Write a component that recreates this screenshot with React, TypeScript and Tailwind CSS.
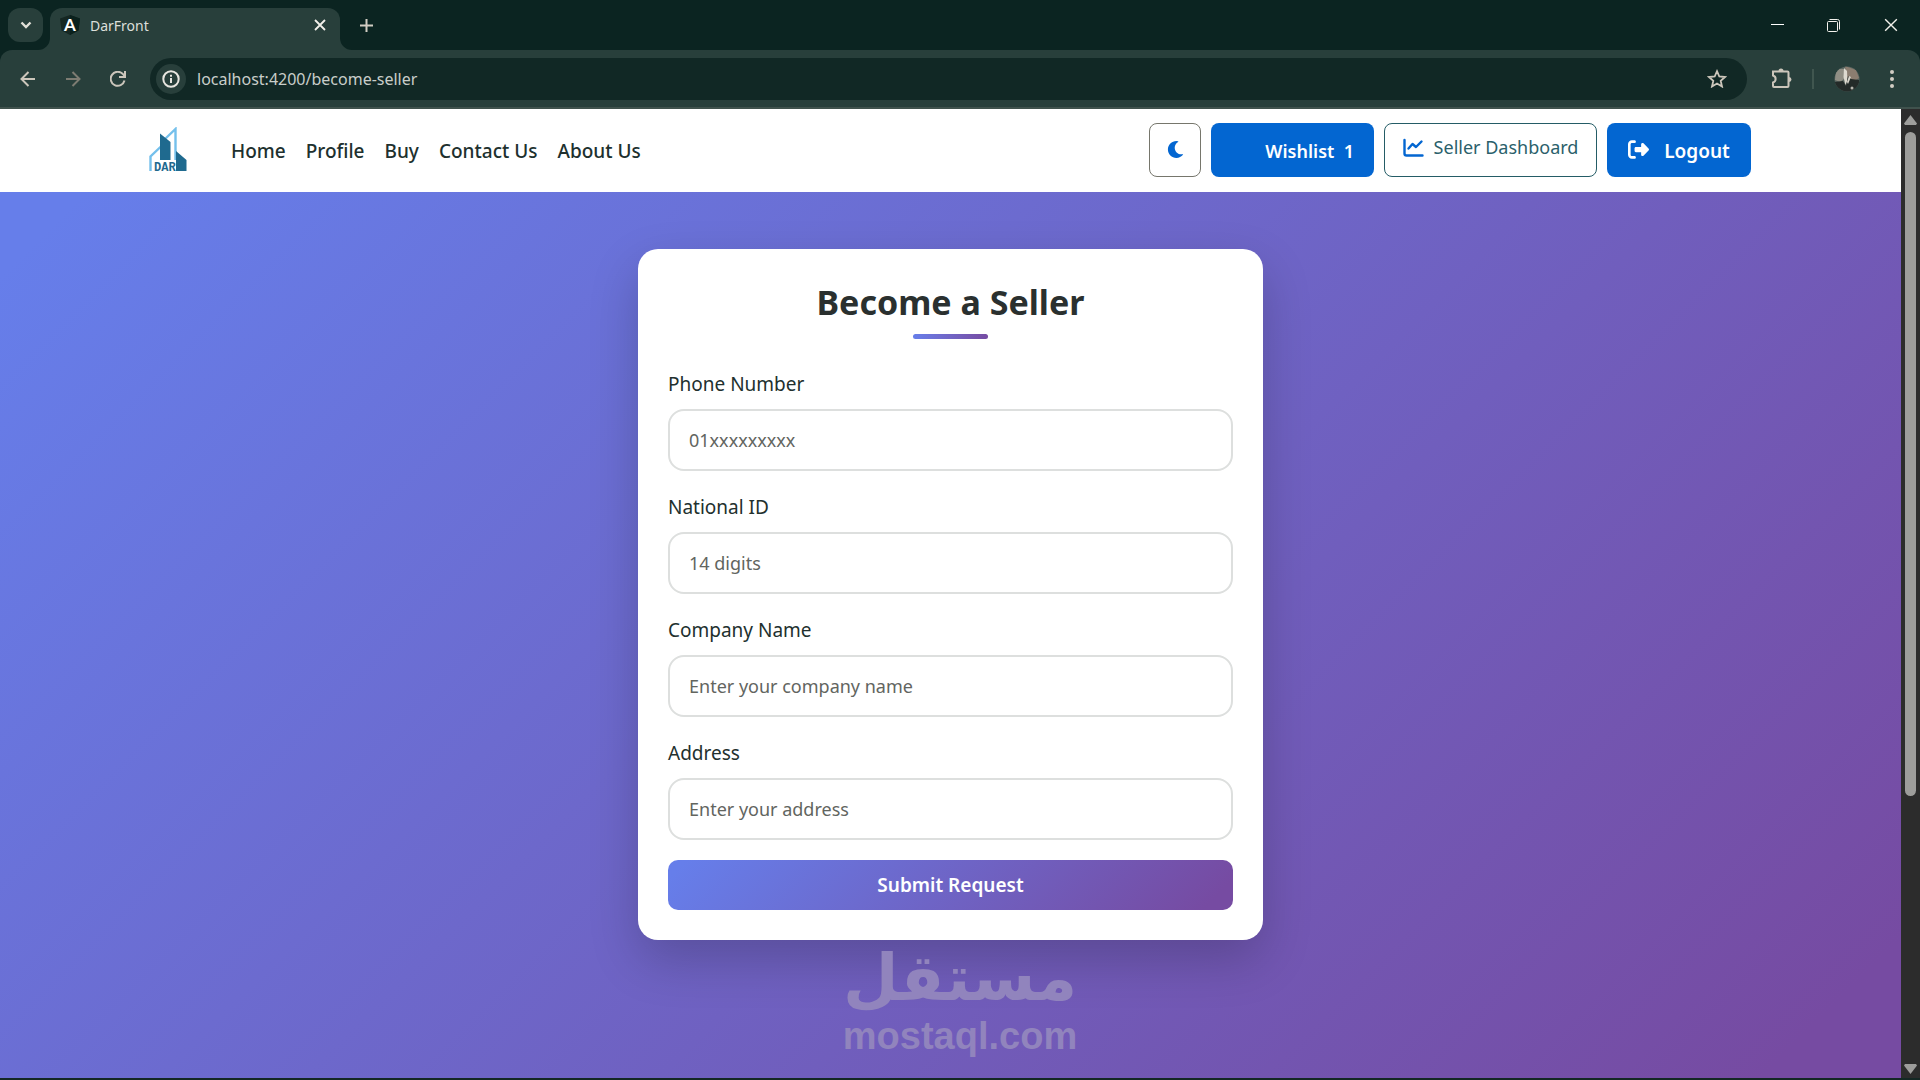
import React from "react";
import { FaMoon } from "react-icons/fa";
import { FaRightFromBracket } from "react-icons/fa6";

function Caret() {
  return (
    <svg width="12" height="8" viewBox="0 0 12 8" fill="none" stroke="#e2e0d8" strokeWidth="2.4">
      <path d="M1.5 1.5 6 6l4.5-4.5" />
    </svg>
  );
}

function Cross({ size, width }: { size: number; width: number }) {
  return (
    <svg width={size} height={size} viewBox="0 0 12 12" fill="none" stroke="#f2f0ea" strokeWidth={width}>
      <path d="m1 1 10 10M11 1 1 11" />
    </svg>
  );
}

function TabStrip() {
  return (
    <div className="flex h-[50px] items-end bg-[#0b2421] pl-2">
      <button aria-label="Search tabs" className="mb-2 flex h-[34px] w-[35px] items-center justify-center rounded-xl bg-[#283f3b]">
        <Caret />
      </button>
      <div className="relative ml-[7px] flex h-[42px] w-[290px] items-center rounded-t-xl bg-[#283f3b] px-[10px] pb-2">
        <svg className="absolute bottom-0 left-[-12px]" width="12" height="12" viewBox="0 0 12 12">
          <path d="M12 0v12H0A12 12 0 0 0 12 0Z" fill="#283f3b" />
        </svg>
        <svg className="absolute right-[-12px] bottom-0" width="12" height="12" viewBox="0 0 12 12">
          <path d="M0 0v12h12A12 12 0 0 1 0 0Z" fill="#283f3b" />
        </svg>
        <svg width="20" height="20" viewBox="0 0 20 20">
          <path d="M10 0 20 3.5 18.5 15.5 10 20 1.5 15.5 0 3.5Z" fill="#152723" />
          <path d="M10 0 20 3.5 18.5 15.5 10 20Z" fill="#0a211d" />
          <text x="10" y="15.5" textAnchor="middle" fontSize="17" fontWeight="700" fill="#fff" fontFamily="Lato, sans-serif">A</text>
        </svg>
        <span className="ml-[10px] flex-1 text-[14px] text-[#dcdfda]">DarFront</span>
        <button aria-label="Close tab" className="mr-1"><Cross size={12} width={1.8} /></button>
      </div>
      <button aria-label="New tab" className="mb-[18px] ml-5">
        <svg width="13" height="13" viewBox="0 0 13 13" stroke="#d2cdc3" strokeWidth="2"><path d="M6.500 0v13M0 6.500h13" /></svg>
      </button>
      <div className="ml-auto flex h-full items-center pr-[22px]">
        <button aria-label="Minimize" className="mr-[43px]">
          <svg width="13" height="13" viewBox="0 0 13 13"><path d="M0 5.500h13" stroke="#fff" /></svg>
        </button>
        <button aria-label="Restore" className="mr-11">
          <svg width="13" height="13" viewBox="0 0 13 13" fill="none" stroke="#f5f3ee">
            <rect x=".5" y="2.500" width="10" height="10" rx="1" />
            <path d="M2.500.5h8a2 2 0 0 1 2 2v8" />
          </svg>
        </button>
        <button aria-label="Close window"><Cross size={14} width={1.2} /></button>
      </div>
    </div>
  );
}

function Toolbar() {
  const stroke = "#ccc6bb";
  return (
    <div className="bg-[#0b2421]">
      <div className="flex h-[59px] items-center rounded-t-xl border-b-2 border-[#40524d] bg-[#283f3b] pr-[26px] pl-5">
        <button aria-label="Back">
          <svg width="16" height="16" viewBox="0 0 16 16" fill="none" stroke={stroke} strokeWidth="2"><path d="M15 8H2M8.500 1 1.500 8l7 7" /></svg>
        </button>
        <button aria-label="Forward" className="ml-[29px]">
          <svg width="16" height="16" viewBox="0 0 16 16" fill="none" stroke="#7d7c72" strokeWidth="2"><path d="M1 8h13M7.500 1l7 7-7 7" /></svg>
        </button>
        <button aria-label="Reload" className="ml-[29px]">
          <svg width="16" height="16" viewBox="0 0 16 16" fill="none" stroke={stroke} strokeWidth="2"><path d="M14.500 9.500A7 7 0 1 1 13 3.200L15 5.500M15 0v6H9" /></svg>
        </button>
        <div className="ml-6 flex h-[42px] flex-1 items-center rounded-full bg-[#112825] pr-5 pl-1.5">
          <button aria-label="Site information" className="flex size-[30px] items-center justify-center rounded-full bg-[#283f3b]">
            <svg width="18" height="18" viewBox="0 0 18 18" fill="none" stroke="#e8e6e0" strokeWidth="2"><circle cx="9" cy="9" r="7.700" /><path d="M9 8v5M9 4.800v2" /></svg>
          </button>
          <input aria-label="Address bar" defaultValue="localhost:4200/become-seller" className="ml-[11px] min-w-0 flex-1 bg-transparent text-[16px] text-[#c9ceca] outline-none" />
          <button aria-label="Bookmark">
            <svg width="20" height="19" viewBox="0 0 20 19" fill="none" stroke={stroke} strokeWidth="1.800"><path d="m10 2.200 2.300 5.300 5.700.5-4.300 3.800 1.300 5.700-5-3-5 3 1.300-5.700L2 8l5.700-.5Z" /></svg>
          </button>
        </div>
        <button aria-label="Extensions" className="ml-6">
          <svg width="21" height="21" viewBox="0 0 21 21" fill="none" stroke={stroke} strokeWidth="2">
            <path d="M2 3.500h14.500a1 1 0 0 1 1 1V18a1 1 0 0 1-1 1H3a1 1 0 0 1-1-1v-3.500c3.500-1 3.500-6 0-7Z" />
            <path d="M7.500 3a2.500 2.500 0 0 1 5 0ZM18 9a2.500 2.500 0 0 1 0 5Z" fill={stroke} stroke="none" />
          </svg>
        </button>
        <span className="ml-5 h-5 w-0.5 bg-[#40564f]" />
        <button aria-label="Account" className="ml-5">
          <svg width="26" height="26" viewBox="0 0 26 26">
            <clipPath id="avatar"><circle cx="13" cy="13" r="12.500" /></clipPath>
            <g clipPath="url(#avatar)">
              <path d="M0 0h26v26H0Z" fill="#5b6661" />
              <path d="M2 3h9l-1 10-4 3-5-2Z" fill="#8f8d83" />
              <path d="m11 0 11 4 3 8-8 5-5-7Z" fill="#8b7d70" />
              <path d="m10 2 3 3 .5 10-2 4-2-8Z" fill="#ddd9cf" />
              <path d="m14 10 3 3 8 1v13H0V16l9-1 3 5Z" fill="#232a28" />
              <path d="m15 10 2 1-3 7-1-2Z" fill="#d9d5cb" />
              <circle cx="18" cy="22" r="1.500" fill="#b7b6ae" />
            </g>
          </svg>
        </button>
        <button aria-label="Menu" className="ml-[30px]">
          <svg width="4" height="18" viewBox="0 0 4 18" fill="#d2cdc3"><circle cx="2" cy="2" r="2" /><circle cx="2" cy="9" r="2" /><circle cx="2" cy="16" r="2" /></svg>
        </button>
      </div>
    </div>
  );
}

function DarLogo() {
  return (
    <svg width="38" height="46" viewBox="0 0 38 46" role="img" aria-label="Dar">
      <path d="M1.500 44V29.500L13 18.500M16 12 26.500 2v31" fill="none" stroke="#74c0ec" strokeWidth="2.400" />
      <path d="M11 6.500 21.500 15v18H11ZM27 24l10.500 9v11H27Z" fill="#1f6a8f" />
      <text x="5" y="43.500" fontSize="12" fontWeight="700" fontFamily="'Liberation Mono', monospace" fill="#1f6a8f">DAR</text>
    </svg>
  );
}

function ChartIcon() {
  return (
    <svg width="21" height="20" viewBox="0 0 21 20" fill="none" stroke="#0366d1" strokeWidth="2.400" strokeLinecap="round" strokeLinejoin="round">
      <path d="M1.500 2v13.500a2 2 0 0 0 2 2h16" />
      <path d="m5.500 10.500 4-4.500 3.500 3 5.500-5.500" />
    </svg>
  );
}

const links = ["Home", "Profile", "Buy", "Contact Us", "About Us"];

function SiteHeader() {
  return (
    <header className="flex h-[83px] items-center bg-white pr-[150px] pb-0.5 pl-[149px]">
      <a href="#home" className="mr-11"><DarLogo /></a>
      <nav className="flex gap-5 pt-1 text-[19px] font-medium text-[#20302e]">
        {links.map((l) => <a key={l} href="#nav">{l}</a>)}
      </nav>
      <div className="ml-auto flex h-[54px] gap-[10px]">
        <button aria-label="Dark mode" className="flex w-[52px] items-center justify-center rounded-lg border border-[#76766c] text-[#0366d1]">
          <FaMoon size={17} />
        </button>
        <button className="w-[163px] rounded-lg bg-[#0366d1] pt-1 pr-5 text-right text-[18px] font-semibold text-white">Wishlist&nbsp; 1</button>
        <button className="flex w-[213px] items-center justify-center gap-[10px] rounded-lg border border-[#245c66] pb-1 text-[18px] text-[#2b5f6b]">
          <ChartIcon />
          Seller Dashboard
        </button>
        <button className="flex w-[144px] items-center justify-center gap-[15px] rounded-lg bg-[#0366d1] pt-1 text-[19px] font-semibold text-white">
          <FaRightFromBracket size={21} className="mb-1" />
          Logout
        </button>
      </div>
    </header>
  );
}

const fields = [
  { id: "phone", label: "Phone Number", hint: "01xxxxxxxxx" },
  { id: "national", label: "National ID", hint: "14 digits" },
  { id: "company", label: "Company Name", hint: "Enter your company name" },
  { id: "address", label: "Address", hint: "Enter your address" },
];

function SellerForm() {
  return (
    <form className="w-[625px] rounded-[20px] bg-white p-[30px] shadow-[0_20px_50px_rgba(0,0,0,0.2)]">
      <h1 className="text-center text-[34px] leading-[46px] font-bold text-[#2a302f]">Become a Seller</h1>
      <div className="mx-auto mt-[9px] h-[5px] w-[75px] rounded-full bg-linear-to-r from-[#667eea] to-[#764ba2]" />
      <div className="mt-[29px] flex flex-col gap-5">
        {fields.map((f) => (
          <div key={f.id} className="flex flex-col">
            <label htmlFor={f.id} className="mb-[9px] text-[19px] leading-8 text-[#22302e]">{f.label}</label>
            <input id={f.id} placeholder={f.hint} className="h-[62px] w-full rounded-2xl border-2 border-[#dddfde] px-[19px] text-[18px] text-[#22302e] placeholder:text-[#62655f]" />
          </div>
        ))}
        <button type="button" className="h-[50px] rounded-[10px] bg-[linear-gradient(135deg,#667eea_3%,#764ba2_95%)] text-[19px] font-semibold text-white">Submit Request</button>
      </div>
    </form>
  );
}

function Watermark() {
  return (
    <div className="flex flex-col items-center text-[#9184bd]">
      <span lang="ar" dir="rtl" className="font-['DejaVu_Sans',sans-serif] text-[64px] leading-[76px] font-bold">مستقل</span>
      <span className="font-['Liberation_Sans',sans-serif] text-[38px] leading-10 font-bold">mostaql.com</span>
    </div>
  );
}

function Scrollbar() {
  return (
    <div className="flex w-[19px] flex-col items-center bg-[#2c2c2c] pt-[6px] pb-1">
      <svg width="13" height="10" viewBox="0 0 13 10"><path d="M6.500 0 13 8.500 12 10H1L0 8.500Z" fill="#9d9d9b" /></svg>
      <div className="mt-[7px] mb-1 w-[11px] flex-1">
        <div className="h-[71.5%] rounded-full bg-[#9d9d9b]" />
      </div>
      <svg width="13" height="10" viewBox="0 0 13 10"><path d="M6.500 10 13 1.500 12 0H1L0 1.500Z" fill="#9d9d9b" /></svg>
    </div>
  );
}

export default function App() {
  return (
    <div className="flex h-screen flex-col overflow-hidden bg-[#142824] pb-0.5 font-['Noto_Sans',sans-serif]">
      <TabStrip />
      <Toolbar />
      <div className="flex min-h-0 flex-1">
        <div className="flex min-w-0 flex-1 flex-col">
          <SiteHeader />
          <main className="flex min-h-0 flex-1 flex-col items-center bg-[linear-gradient(135deg,#667eea_3%,#764ba2_95%)] pt-[57px]">
            <SellerForm />
            <div className="ml-[19px]"><Watermark /></div>
          </main>
        </div>
        <Scrollbar />
      </div>
    </div>
  );
}
